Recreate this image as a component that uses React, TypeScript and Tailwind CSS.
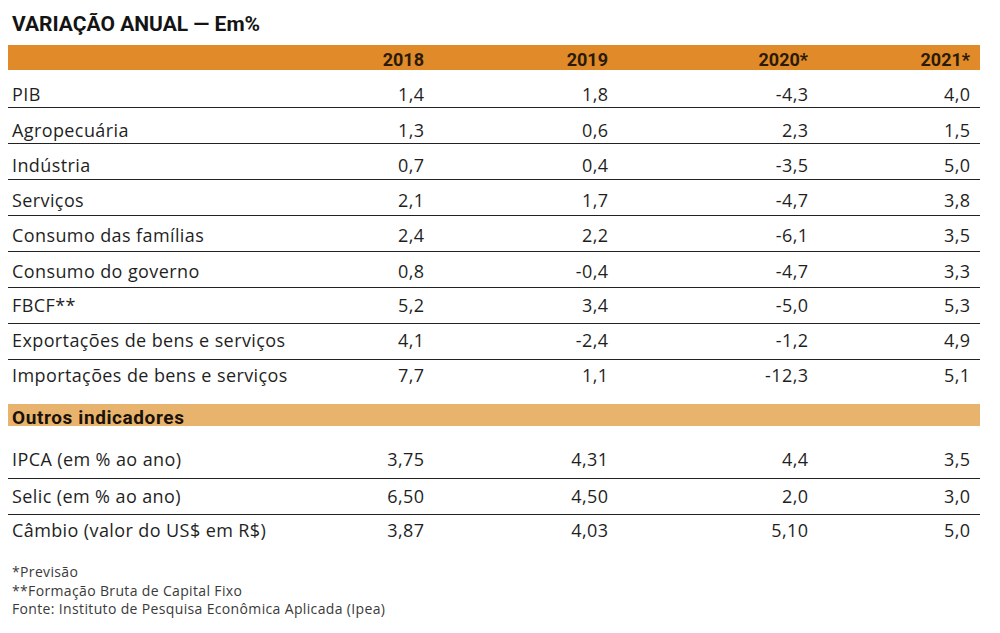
import React from "react";

type Row = { label: string; v: [string, string, string, string]; line: boolean; pb: string };

const main: Row[] = [
  { label: "PIB", v: ["1,4", "1,8", "-4,3", "4,0"], line: true, pb: "pb-[1px]" },
  { label: "Agropecuária", v: ["1,3", "0,6", "2,3", "1,5"], line: true, pb: "pb-[1px]" },
  { label: "Indústria", v: ["0,7", "0,4", "-3,5", "5,0"], line: true, pb: "pb-[2px]" },
  { label: "Serviços", v: ["2,1", "1,7", "-4,7", "3,8"], line: true, pb: "pb-[3px]" },
  { label: "Consumo das famílias", v: ["2,4", "2,2", "-6,1", "3,5"], line: true, pb: "pb-[4px]" },
  { label: "Consumo do governo", v: ["0,8", "-0,4", "-4,7", "3,3"], line: true, pb: "pb-[4px]" },
  { label: "FBCF**", v: ["5,2", "3,4", "-5,0", "5,3"], line: true, pb: "pb-[6px]" },
  { label: "Exportações de bens e serviços", v: ["4,1", "-2,4", "-1,2", "4,9"], line: true, pb: "pb-[7px]" },
  { label: "Importações de bens e serviços", v: ["7,7", "1,1", "-12,3", "5,1"], line: false, pb: "pb-[9px]" },
];

const others: Row[] = [
  { label: "IPCA (em % ao ano)", v: ["3,75", "4,31", "4,4", "3,5"], line: true, pb: "pb-[7px]" },
  { label: "Selic (em % ao ano)", v: ["6,50", "4,50", "2,0", "3,0"], line: true, pb: "pb-[6px]" },
  { label: "Câmbio (valor do US$ em R$)", v: ["3,87", "4,03", "5,10", "5,0"], line: false, pb: "pb-[9px]" },
];

const grid = "grid grid-cols-[300px_116px_184px_200px_162px] pr-[10px]";
const body = "font-['Open_Sans',sans-serif]";
const head = "font-['Roboto','Liberation_Sans',sans-serif]";

function DataRow({ r }: { r: Row }) {
  return (
    <div
      className={`${grid} h-[36px] items-end ${r.pb} text-[18px] leading-[24px] tracking-[0.4px] text-[#1f1f1f] ${body} ${
        r.line ? "border-b border-[#222]" : ""
      }`}
    >
      <div className="pl-[4px] whitespace-nowrap">{r.label}</div>
      {r.v.map((x, i) => (
        <div key={i} className="text-right mr-[-0.4px]">
          {x}
        </div>
      ))}
    </div>
  );
}

export default function App() {
  return (
    <div className="w-[1000px] h-[633px] bg-white overflow-hidden">
      <div
        className={`pl-[12px] pt-[12px] h-[45px] text-[21px] leading-[24px] font-bold text-[#141414] ${head}`}
      >
        VARIAÇÃO ANUAL — Em%
      </div>
      <div className="ml-[8px] w-[972px]">
        <div
          className={`${grid} h-[25px] items-start pt-[5px] bg-[#e08a29] text-[18px] leading-[20px] font-bold text-[#2a1a08] ${head}`}
        >
          <div />
          <div className="text-right">2018</div>
          <div className="text-right">2019</div>
          <div className="text-right">2020*</div>
          <div className="text-right">2021*</div>
        </div>
        <div className="h-[2px]" />
        {main.map((r) => (
          <DataRow key={r.label} r={r} />
        ))}
        <div className="h-[8px]" />
        <div
          className={`h-[22px] pl-[4px] pt-[3px] bg-[#e8b46d] text-[19px] leading-[22px] tracking-[0.6px] font-bold text-[#1a1208] ${head}`}
        >
          Outros indicadores
        </div>
        <div className="h-[17px]" />
        {others.map((r) => (
          <DataRow key={r.label} r={r} />
        ))}
      </div>
      <div
        className={`pl-[12px] pt-[12px] text-[14px] leading-[18.5px] tracking-[0.35px] text-[#3a3a3a] ${body}`}
      >
        <div>*Previsão</div>
        <div>**Formação Bruta de Capital Fixo</div>
        <div>Fonte: Instituto de Pesquisa Econômica Aplicada (Ipea)</div>
      </div>
    </div>
  );
}
